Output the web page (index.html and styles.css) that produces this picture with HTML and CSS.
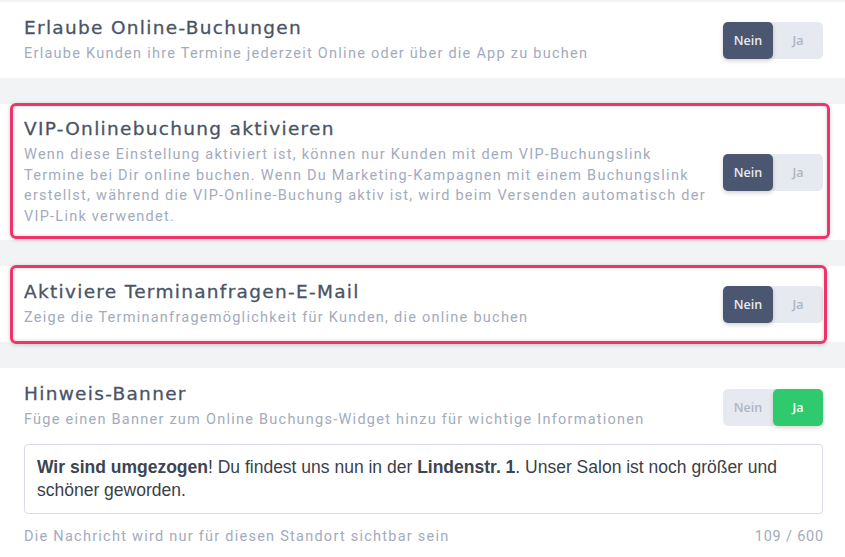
FILE: index.html
```html
<!DOCTYPE html>
<html lang="de">
<head>
<meta charset="utf-8">
<title>Online-Buchung Einstellungen</title>
<link rel="stylesheet" href="styles.css">
</head>
<body>
<div class="page">
  <section class="card">
    <div class="row">
      <div class="text">
        <h2 class="title">Erlaube Online-Buchungen</h2>
        <p class="desc">Erlaube Kunden ihre Termine jederzeit Online oder über die App zu buchen</p>
      </div>
      <div class="toggle"><span class="opt on-dark">Nein</span><span class="opt">Ja</span></div>
    </div>
  </section>

  <section class="card card-vip">
    <div class="row">
      <div class="text">
        <h2 class="title">VIP-Onlinebuchung aktivieren</h2>
        <p class="desc">Wenn diese Einstellung aktiviert ist, können nur Kunden mit dem VIP-Buchungslink Termine bei Dir online buchen. Wenn Du Marketing-Kampagnen mit einem Buchungslink erstellst, während die VIP-Online-Buchung aktiv ist, wird beim Versenden automatisch der VIP-Link verwendet.</p>
      </div>
      <div class="toggle"><span class="opt on-dark">Nein</span><span class="opt">Ja</span></div>
    </div>
    <div class="highlight hl-vip"></div>
  </section>

  <section class="card card-mail">
    <div class="row">
      <div class="text">
        <h2 class="title">Aktiviere Terminanfragen-E-Mail</h2>
        <p class="desc">Zeige die Terminanfragemöglichkeit für Kunden, die online buchen</p>
      </div>
      <div class="toggle"><span class="opt on-dark">Nein</span><span class="opt">Ja</span></div>
    </div>
    <div class="highlight hl-mail"></div>
  </section>

  <section class="card card-banner">
    <div class="row row-top">
      <div class="text">
        <h2 class="title">Hinweis-Banner</h2>
        <p class="desc">Füge einen Banner zum Online Buchungs-Widget hinzu für wichtige Informationen</p>
      </div>
      <div class="toggle"><span class="opt">Nein</span><span class="opt on-green">Ja</span></div>
    </div>
    <div class="message"><b>Wir sind umgezogen</b>! Du findest uns nun in der <b>Lindenstr. 1</b>. Unser Salon ist noch größer und schöner geworden.</div>
    <div class="footer">
      <span>Die Nachricht wird nur für diesen Standort sichtbar sein</span>
      <span class="count">109 / 600</span>
    </div>
  </section>
</div>
</body>
</html>
```

FILE: styles.css
```css
* { box-sizing: border-box; }
html, body { margin: 0; padding: 0; }
body {
  background: #f2f3f5;
  font-family: "Open Sans", "Noto Sans", sans-serif;
  width: 845px;
  height: 557px;
  overflow: hidden;
}
.page {
  padding-top: 2px;
  display: flex;
  flex-direction: column;
  gap: 26px;
}
.card {
  position: relative;
  background: #ffffff;
  padding: 14px 22px 14px 24px;
}
.card-vip { padding-top: 13px; padding-bottom: 13px; }
.row {
  display: flex;
  align-items: center;
  gap: 14px;
}
.row-top { align-items: flex-start; }
.text { flex: 1; min-width: 0; }
.title {
  margin: 0;
  font-family: "DejaVu Sans", "Open Sans", sans-serif;
  font-size: 18.5px;
  letter-spacing: 1.3px;
  line-height: 24px;
  font-weight: normal;
  color: #4a5466;
  -webkit-text-stroke: 0.3px #4a5466;
}
.desc {
  margin: 4px 0 0;
  font-family: Roboto, "Noto Sans", sans-serif;
  font-size: 14.5px;
  letter-spacing: 1.25px;
  line-height: 20.4px;
  color: #a3abbd;
}
.toggle {
  display: flex;
  width: 100px;
  height: 37px;
  background: #e6e9ef;
  border-radius: 5px;
  flex-shrink: 0;
}
.row-top .toggle { margin-top: 7px; }
.opt {
  flex: 1;
  display: flex;
  align-items: center;
  justify-content: center;
  font-size: 12.5px;
  font-weight: 600;
  color: #aeb5c4;
  border-radius: 5px;
}
.on-dark {
  background: #4b5670;
  color: #e8ebf0;
  box-shadow: 0 2px 4px rgba(0,0,0,0.18);
}
.on-green {
  background: #2fca6e;
  color: #ffffff;
  box-shadow: 0 2px 4px rgba(0,0,0,0.15);
}
.highlight {
  position: absolute;
  border: 3px solid #f0336a;
  border-radius: 6px;
  box-shadow: 0 1px 4px rgba(0,0,0,0.18), inset 0 0 4px rgba(0,0,0,0.15);
  pointer-events: none;
}
.hl-vip { top: -1px; left: 10px; right: 15px; bottom: 1px; }
.hl-mail { top: -1px; left: 10px; right: 18px; bottom: -2px; }
.card-banner { min-height: 200px; }
.message {
  margin-top: 13px;
  border: 1px solid #d8dce3;
  border-radius: 4px;
  padding: 11px 12px;
  font-family: "Liberation Sans", Arial, sans-serif;
  font-size: 17.5px;
  line-height: 23px;
  color: #3a3f48;
  min-height: 68px;
}
.message b { color: #3d4452; }
.footer {
  display: flex;
  justify-content: space-between;
  margin-top: 13px;
  font-family: Roboto, "Noto Sans", sans-serif;
  font-size: 14.5px;
  letter-spacing: 1.25px;
  line-height: 20px;
  color: #a3abbd;
}
.count { letter-spacing: 0.8px; margin-right: -1px; }
```
